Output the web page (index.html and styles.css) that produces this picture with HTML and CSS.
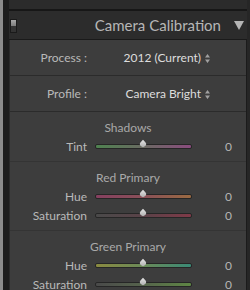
FILE: index.html
```html
<!DOCTYPE html>
<html lang="en">
<head>
    <meta charset="UTF-8">
    <title>Camera Calibration</title>
    <link rel="stylesheet" href="styles.css">
</head>
<body>
    <div class="edge"></div>
    <div class="gutter"></div>
    <div class="panel">
        <div class="topbar"></div>
        <div class="header">
            <div class="toggle"><span class="toggle-on"></span></div>
            <span class="title">Camera Calibration</span>
            <span class="collapse"></span>
        </div>
        <div class="body">
            <div class="pick-row">
                <span class="label">Process :</span>
                <span class="pick">2012 (Current)</span>
                <svg class="updown" width="5" height="9" viewBox="0 0 5 9"><path d="M2.5 0L5 3.5H0z M2.5 9L0 5.5H5z" fill="#a0a0a0"/></svg>
            </div>
            <div class="pick-row">
                <span class="label">Profile :</span>
                <span class="pick">Camera Bright</span>
                <svg class="updown" width="5" height="9" viewBox="0 0 5 9"><path d="M2.5 0L5 3.5H0z M2.5 9L0 5.5H5z" fill="#a0a0a0"/></svg>
            </div>

            <div class="group">
                <div class="heading">Shadows</div>
                <div class="slider-row">
                    <span class="label">Tint</span>
                    <div class="track tint"><span class="thumb"></span></div>
                    <span class="value">0</span>
                </div>
            </div>

            <div class="group">
                <div class="heading">Red Primary</div>
                <div class="slider-row">
                    <span class="label">Hue</span>
                    <div class="track red-hue"><span class="thumb"></span></div>
                    <span class="value">0</span>
                </div>
                <div class="slider-row">
                    <span class="label">Saturation</span>
                    <div class="track red-sat"><span class="thumb"></span></div>
                    <span class="value">0</span>
                </div>
            </div>

            <div class="group">
                <div class="heading">Green Primary</div>
                <div class="slider-row">
                    <span class="label">Hue</span>
                    <div class="track green-hue"><span class="thumb"></span></div>
                    <span class="value">0</span>
                </div>
                <div class="slider-row">
                    <span class="label">Saturation</span>
                    <div class="track green-sat"><span class="thumb"></span></div>
                    <span class="value">0</span>
                </div>
            </div>
        </div>
    </div>
</body>
</html>
```
FILE: styles.css
```css
html, body {
    margin: 0;
    height: 100%;
}
body {
    display: flex;
    background-color: #262626;
    font-family: "Lato", "Open Sans", sans-serif;
    font-size: 12px;
    color: #b9b9b9;
    overflow: hidden;
}
.edge {
    width: 3px;
    background: #8c8c8c;
}
.gutter {
    width: 6px;
    background: #1d1d1d;
}
.panel {
    flex: 1;
    margin-right: 3px;
    display: flex;
    flex-direction: column;
}
.panel > * {
    flex: none;
}
.topbar {
    height: 9px;
    background: #2b2b2b;
    border-bottom: 2px solid #171717;
}
.header {
    height: 28px;
    background: #2c2c2c;
    display: flex;
    align-items: center;
    border-bottom: 1px solid #1a1a1a;
}
.toggle {
    width: 7px;
    height: 14px;
    margin-left: 1px;
    margin-top: 2px;
    border: 1px solid #1a1a1a;
    background: #333;
    box-sizing: border-box;
}
.toggle-on {
    display: block;
    height: 6px;
    background: linear-gradient(#a8a8a8, #7c7c7c);
}
.title {
    flex: 1;
    text-align: right;
    font-size: 15px;
    color: #b6b6b6;
    margin-right: 13px;
}
.collapse {
    width: 0;
    height: 0;
    border-left: 5px solid transparent;
    border-right: 5px solid transparent;
    border-top: 9px solid #b5b5b5;
    margin-right: 3px;
}
.body {
    flex: 1 0 auto;
    background: #3d3d3d;
    border-left: 1px solid #2a2a2a;
    border-right: 1px solid #1b1b1b;
}
.label {
    width: 77px;
    text-align: right;
    flex: none;
}
.pick-row {
    height: 35px;
    display: flex;
    align-items: center;
    border-bottom: 1px solid #2b2b2b;
}
.pick {
    flex: 1;
    text-align: right;
    color: #dedede;
}
.updown {
    margin: 1px 36px 0 4px;
}
.group {
    padding: 7px 0 5px;
    border-bottom: 1px solid #343434;
}
.heading {
    height: 18px;
    line-height: 18px;
    text-align: center;
    color: #a9a9a9;
}
.slider-row {
    height: 19px;
    display: flex;
    align-items: center;
}
.track {
    position: relative;
    width: 95px;
    height: 3px;
    margin-left: 8px;
    border: 1px solid #262626;
    border-radius: 2px;
}
.thumb {
    position: absolute;
    left: 44px;
    top: -4px;
    width: 6px;
    height: 6px;
    background: linear-gradient(135deg, #e4e4e4, #a9a9a9);
    border-radius: 0 50% 50% 50%;
    transform: rotate(45deg);
}
.value {
    flex: 1;
    text-align: right;
    margin-right: 14px;
    color: #b4b4b4;
}
.tint {
    background: linear-gradient(to right, #4f8250, #6a6a62, #8a4c7e);
}
.red-hue {
    background: linear-gradient(to right, #864060, #8a5058, #9a6a42);
}
.red-sat {
    background: linear-gradient(to right, #4a4a4a, #5a4248, #803a48);
}
.green-hue {
    background: linear-gradient(to right, #8a8a40, #6a8a58, #3a8a76);
}
.green-sat {
    background: linear-gradient(to right, #4a4a4a, #56644c, #5e8644);
}
```
